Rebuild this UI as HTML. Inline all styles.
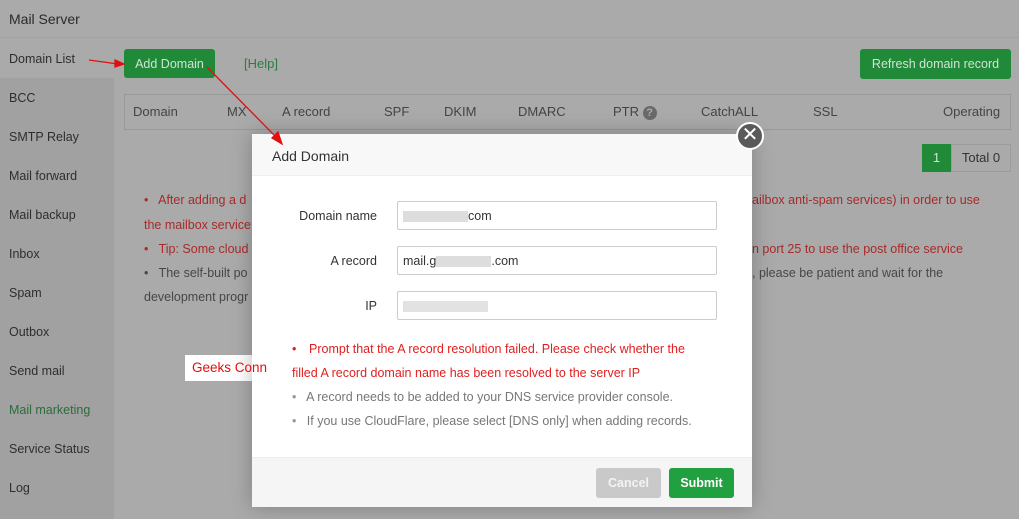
<!DOCTYPE html>
<html><head><style>
*{margin:0;padding:0;box-sizing:border-box}
body{width:1019px;height:519px;overflow:hidden;background:#aaaaaa;font-family:"Liberation Sans",sans-serif;font-size:13px;color:#333;position:relative}
.a{position:absolute}
.side{left:0;top:78px;width:114px;height:441px;background:#a1a1a1}
.nav{left:9px;font-size:12.5px;color:#2e2e2e}
.gr{background:#218a39;color:#cfe3d3;border-radius:3px;font-size:12.5px;text-align:center;line-height:30px}
.th{top:104px;font-size:13px;color:#444}
.inp{left:397px;width:320px;height:29px;border:1px solid #ccc;border-radius:2px;background:#fff;font-size:12.5px;padding:7px 0 0 5px;color:#333}
.blur{display:inline-block;height:11px;background:#ddd;vertical-align:middle}
.lbl{width:120px;text-align:right;left:257px;font-size:12.5px;color:#333}
.r{color:#a82a2a;font-size:12.5px}
.g{color:#474747;font-size:12.5px}
</style></head><body>
<div class="a" style="left:0;top:0;width:1019px;height:38px;border-bottom:1px solid #a2a2a2"></div>
<div class="a" style="left:9px;top:11px;font-size:14px;color:#2a2a2a">Mail Server</div>
<div class="a side"></div>
<div class="a nav" style="top:52px">Domain List</div>
<div class="a nav" style="top:91px">BCC</div>
<div class="a nav" style="top:130px">SMTP Relay</div>
<div class="a nav" style="top:169px">Mail forward</div>
<div class="a nav" style="top:208px">Mail backup</div>
<div class="a nav" style="top:247px">Inbox</div>
<div class="a nav" style="top:286px">Spam</div>
<div class="a nav" style="top:325px">Outbox</div>
<div class="a nav" style="top:364px">Send mail</div>
<div class="a nav" style="top:403px;color:#2a6d3c">Mail marketing</div>
<div class="a nav" style="top:442px">Service Status</div>
<div class="a nav" style="top:481px">Log</div>

<div class="a gr" style="left:124px;top:49px;width:91px;height:29px">Add Domain</div>
<div class="a" style="left:244px;top:56px;color:#2f7c3e;font-size:13px">[Help]</div>
<div class="a gr" style="left:860px;top:49px;width:151px;height:30px">Refresh domain record</div>
<div class="a" style="left:124px;top:94px;width:887px;height:36px;border:1px solid #999"></div>
<div class="a th" style="left:133px">Domain</div>
<div class="a th" style="left:227px">MX</div>
<div class="a th" style="left:282px">A record</div>
<div class="a th" style="left:384px">SPF</div>
<div class="a th" style="left:444px">DKIM</div>
<div class="a th" style="left:518px">DMARC</div>
<div class="a th" style="left:613px">PTR <span style="display:inline-block;width:14px;height:14px;border-radius:50%;background:#6a6a6a;color:#aaa;font-size:11px;text-align:center;line-height:14px;font-weight:bold">?</span></div>
<div class="a th" style="left:701px">CatchALL</div>
<div class="a th" style="left:813px">SSL</div>
<div class="a th" style="left:943px">Operating</div>
<div class="a" style="left:922px;top:144px;width:29px;height:28px;background:#218a39;color:#cfe3d3;text-align:center;line-height:28px;font-size:13px">1</div>
<div class="a" style="left:951px;top:144px;width:60px;height:28px;border:1px solid #9c9c9c;text-align:center;line-height:26px;font-size:13px;color:#333">Total 0</div>
<div class="a r" style="left:144px;top:193px">•&nbsp;&nbsp; After adding a d</div>
<div class="a r" style="left:144px;top:218px">the mailbox service</div>
<div class="a r" style="left:144px;top:242px">•&nbsp;&nbsp; Tip: Some cloud</div>
<div class="a g" style="left:144px;top:266px">•&nbsp;&nbsp; The self-built po</div>
<div class="a g" style="left:144px;top:290px">development progr</div>
<div class="a r" style="left:752px;top:193px">ailbox anti-spam services) in order to use</div>
<div class="a r" style="left:752px;top:242px">n port 25 to use the post office service</div>
<div class="a g" style="left:752px;top:266px">, please be patient and wait for the</div>

<div class="a" style="left:185px;top:355px;width:70px;height:26px;background:#fff"></div>

<div class="a" style="left:252px;top:134px;width:500px;height:373px;background:#fff;box-shadow:0 0 20px rgba(0,0,0,.25)">
 <div style="height:42px;background:#f8f8f8;border-bottom:1px solid #eee;padding:14px 0 0 20px;font-size:14px;color:#333">Add Domain</div>
 <div class="a" style="left:0;top:323px;width:500px;height:50px;background:#f5f5f5;border-top:1px solid #eee"></div>
 <div class="a" style="left:344px;top:334px;width:65px;height:30px;background:#c9c9c9;color:#f4f4f4;border-radius:3px;text-align:center;line-height:30px;font-weight:bold;font-size:12.5px">Cancel</div>
 <div class="a" style="left:417px;top:334px;width:65px;height:30px;background:#20a03f;color:#fff;border-radius:3px;text-align:center;line-height:30px;font-weight:bold;font-size:12.5px">Submit</div>
</div>
<div class="a" style="left:192px;top:360px;color:#e01010;font-size:13.5px;white-space:nowrap">Geeks Conn</div>
<div class="a lbl" style="top:209px">Domain name</div>
<div class="a lbl" style="top:254px">A record</div>
<div class="a lbl" style="top:299px">IP</div>
<div class="a inp" style="top:201px"><span class="blur" style="width:65px"></span>com</div>
<div class="a inp" style="top:246px">mail.g<span class="blur" style="width:55px"></span>.com</div>
<div class="a inp" style="top:291px"><span class="blur" style="width:85px;background:#e2e2e2"></span></div>
<div class="a" style="left:292px;top:337px;color:#e02020;font-size:12.5px;line-height:24px;width:420px"><span style="position:absolute;left:0">•</span><div style="padding-left:17px">Prompt that the A record resolution failed. Please check whether the</div>filled A record domain name has been resolved to the server IP</div>
<div class="a" style="left:292px;top:385px;color:#777;font-size:12.5px;line-height:24px"><span style="color:#999">•</span>&nbsp;&nbsp; A record needs to be added to your DNS service provider console.<br><span style="color:#999">•</span>&nbsp;&nbsp; If you use CloudFlare, please select [DNS only] when adding records.</div>
<div class="a" style="left:736px;top:122px;width:28px;height:28px;border-radius:50%;background:#5a5a5a;border:2px solid #fff;color:#fff;text-align:center;line-height:23px;font-size:20px">✕</div>

<svg class="a" style="left:0;top:0" width="1019" height="519">
 <g stroke="#e01010" stroke-width="1.3" fill="#e01010">
 <line x1="89" y1="60" x2="118" y2="64"/><polygon points="124,64 115,60 115,67"/>
 <line x1="207" y1="67" x2="277" y2="138"/><polygon points="282,144 272,138 278,132"/>
 </g>
</svg>
</body></html>
